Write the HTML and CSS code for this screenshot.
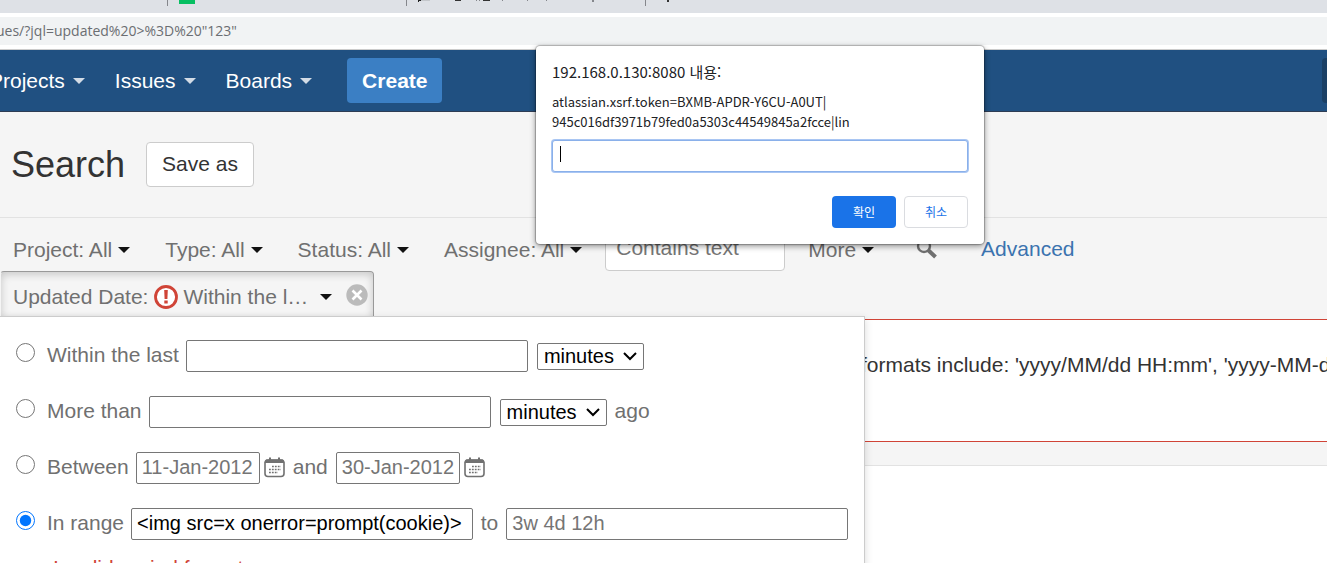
FILE: index.html
```
<!DOCTYPE html>
<html lang="ko">
<head>
    <meta charset="UTF-8">
    <meta name="viewport" content="width=device-width, initial-scale=1.0">
    <title>Search</title>
    <link rel="stylesheet" href="styles.css">
</head>
<body>
    <!-- browser bars -->
    <div class="tab-strip">
        <div class="tab tab-first"></div>
        <div class="tab"><span class="favicon"></span></div>
        <div class="tab">
            <svg class="tab-marks" width="200" height="2" viewBox="0 0 200 2">
                <path d="M0 0h3v1h-2v1h-1z" fill="#222"/>
                <path d="M3 0h9v1h-9z" fill="#c4c7cb"/>
                <path d="M37 0h6v1h-6zM65 0h7v1h-7z" fill="#333"/>
                <path d="M58 0h1v1h-1zM61 0h1v1h-1zM84 0h1v1h-1zM109 0h1v1h-1zM128 0h1v1h-1zM174 0h2v2h-2z" fill="#85878c"/>
            </svg>
        </div>
        <div class="tab tab-last">
            <svg class="tab-marks" width="20" height="2" viewBox="0 0 20 2">
                <path d="M10 0h2v2h-2z" fill="#333"/>
            </svg>
        </div>
    </div>
    <div class="address-bar">
        <span class="url">ues/?jql=updated%20&gt;%3D%20"123"</span>
    </div>

    <!-- top navigation -->
    <header class="header">
        <nav class="nav">
            <a href="#" class="nav-link">Projects <span class="arrow"></span></a>
            <a href="#" class="nav-link">Issues <span class="arrow"></span></a>
            <a href="#" class="nav-link">Boards <span class="arrow"></span></a>
        </nav>
        <button type="button" class="create-btn">Create</button>
        <div class="quick-search"></div>
    </header>

    <div class="title-bar">
        <h1>Search</h1>
        <button type="button" class="save-btn">Save as</button>
    </div>

    <main class="content">
        <div class="filters">
            <button type="button" class="filter">Project: All <span class="arrow"></span></button>
            <button type="button" class="filter">Type: All <span class="arrow"></span></button>
            <button type="button" class="filter">Status: All <span class="arrow"></span></button>
            <button type="button" class="filter">Assignee: All <span class="arrow"></span></button>
            <input type="text" class="text-filter" placeholder="Contains text" aria-label="Contains text">
            <button type="button" class="filter more">More <span class="arrow"></span></button>
            <button type="button" class="search-btn" aria-label="Search">
                <svg width="22" height="22" viewBox="0 0 22 22">
                    <circle cx="8" cy="8" r="6" fill="none" stroke="#707070" stroke-width="2.4"/>
                    <path d="M12 12l7.5 7" stroke="#707070" stroke-width="4"/>
                </svg>
            </button>
            <a href="#" class="advanced">Advanced</a>
        </div>

        <div class="updated-row">
            <div class="updated">
                <button type="button" class="updated-btn">
                    <span>Updated Date:</span>
                    <svg class="warn" width="24" height="24" viewBox="0 0 24 24">
                        <circle cx="12" cy="12" r="10.5" fill="#fff" stroke="#d04437" stroke-width="2.8"/>
                        <path d="M10.2 5h3.6l-.4 9h-2.8zM10.3 15.5h3.4v3h-3.4z" fill="#d04437"/>
                    </svg>
                    <span class="updated-value">Within the l…</span>
                    <span class="arrow"></span>
                </button>
                <button type="button" class="remove-btn" aria-label="Remove">
                    <svg width="22" height="22" viewBox="0 0 22 22">
                        <circle cx="11" cy="11" r="10.7" fill="#bbb"/>
                        <path d="M6.5 6.5l9 9M15.5 6.5l-9 9" stroke="#fff" stroke-width="2.6"/>
                    </svg>
                </button>
            </div>

            <form class="panel">
                <div class="row">
                    <input type="radio" id="within" name="range">
                    <label for="within">Within the last</label>
                    <input type="text" class="field" aria-label="Within the last">
                    <select class="unit" aria-label="Unit"><option>minutes</option></select>
                </div>
                <div class="row">
                    <input type="radio" id="more" name="range">
                    <label for="more">More than</label>
                    <input type="text" class="field" aria-label="More than">
                    <select class="unit" aria-label="Unit"><option>minutes</option></select>
                    <span class="word">ago</span>
                </div>
                <div class="row">
                    <input type="radio" id="between" name="range">
                    <label for="between">Between</label>
                    <input type="text" class="field date" placeholder="11-Jan-2012" aria-label="From date">
                    <button type="button" class="calendar-btn" aria-label="Pick from date">
                        <svg width="21" height="21" viewBox="0 0 21 21">
                            <rect x="1" y="3" width="19" height="16.5" rx="3" fill="none" stroke="#707070" stroke-width="1.6"/>
                            <path d="M2 2.5h17l1.5 3.5h-20zM5 .5h2v3h-2zM14 .5h2v3h-2z" fill="#707070"/>
                            <path d="M8 9.5h9M5 12.5h12M5 15.5h9" stroke="#707070" stroke-width="1.5" stroke-dasharray="1.8 1.1"/>
                        </svg>
                    </button>
                    <span class="word">and</span>
                    <input type="text" class="field date" placeholder="30-Jan-2012" aria-label="To date">
                    <button type="button" class="calendar-btn" aria-label="Pick to date">
                        <svg width="21" height="21" viewBox="0 0 21 21">
                            <rect x="1" y="3" width="19" height="16.5" rx="3" fill="none" stroke="#707070" stroke-width="1.6"/>
                            <path d="M2 2.5h17l1.5 3.5h-20zM5 .5h2v3h-2zM14 .5h2v3h-2z" fill="#707070"/>
                            <path d="M8 9.5h9M5 12.5h12M5 15.5h9" stroke="#707070" stroke-width="1.5" stroke-dasharray="1.8 1.1"/>
                        </svg>
                    </button>
                </div>
                <div class="row">
                    <input type="radio" id="inrange" name="range" checked>
                    <label for="inrange">In range</label>
                    <input type="text" class="field" value="&lt;img src=x onerror=prompt(cookie)&gt;" aria-label="Range start">
                    <span class="word">to</span>
                    <input type="text" class="field" placeholder="3w 4d 12h" aria-label="Range end">
                </div>
                <div class="field-error">Invalid period format</div>
            </form>
        </div>

        <div class="error-message">formats include: 'yyyy/MM/dd HH:mm', 'yyyy-MM-dd HH:mm'</div>
    </main>

    <div class="results"></div>

    <!-- prompt dialog -->
    <div class="dialog" role="dialog" aria-labelledby="dialogTitle">
        <div class="dialog-title" id="dialogTitle">192.168.0.130:8080 내용:</div>
        <label class="dialog-text" for="promptInput">atlassian.xsrf.token=BXMB-APDR-Y6CU-A0UT|<br>945c016df3971b79fed0a5303c44549845a2fcce|lin</label>
        <div class="prompt-box">
            <input type="text" id="promptInput" class="prompt-input">
        </div>
        <div class="dialog-buttons">
            <button type="button" class="ok-btn">확인</button>
            <button type="button" class="cancel-btn">취소</button>
        </div>
    </div>
</body>
</html>
```

FILE: styles.css
```
* {
    box-sizing: border-box;
}

body {
    display: flex;
    flex-direction: column;
    height: 100vh;
    margin: 0;
    overflow: hidden;
    background-color: #f5f5f5;
    color: #333;
    font-family: Arial, "Liberation Sans", sans-serif;
    font-size: 21px;
    line-height: 24px;
}

button, input, select {
    font: inherit;
    margin: 0;
}

button {
    padding: 0;
    border: none;
    background: none;
    color: inherit;
    white-space: nowrap;
    cursor: pointer;
}

a {
    text-decoration: none;
}

svg {
    display: block;
}

.arrow {
    display: inline-block;
    border: 6px solid transparent;
    border-top-color: #111;
    border-bottom: none;
}

/* browser bars */
.tab-strip {
    display: flex;
    flex-shrink: 0;
    height: 13px;
    background-color: #dee1e6;
}

.tab {
    width: 239px;
    height: 6px;
    padding-left: 11px;
    border-right: 1px solid #85878c;
}

.tab-first {
    width: 168px;
}

.tab-last {
    border: none;
}

.favicon {
    display: block;
    width: 16px;
    height: 4px;
    background-color: #07bf62;
}

.address-bar {
    flex-shrink: 0;
    height: 37px;
    padding: 4px 0;
    border-bottom: 1px solid #ccc;
    background-color: #fff;
}

.url {
    display: block;
    height: 28px;
    background-color: #f1f3f4;
    color: #6b6e72;
    font-family: "Open Sans", "Noto Sans", sans-serif;
    font-size: 14px;
    line-height: 28px;
    text-indent: -4px;
}

/* top navigation */
.header {
    display: flex;
    align-items: center;
    flex-shrink: 0;
    height: 62px;
    border-bottom: 1px solid #2e3d54;
    background-color: #205081;
}

.nav {
    display: flex;
    gap: 30px;
    margin-left: -11px;
}

.nav-link {
    display: flex;
    align-items: center;
    gap: 8px;
    color: #fff;
}

.nav-link .arrow {
    border-top-color: #d3dce6;
}

.create-btn {
    height: 45px;
    margin-left: 35px;
    padding: 0 15px;
    border-radius: 4px;
    background-color: #3b7fc4;
    color: #fff;
    font-weight: bold;
}

.quick-search {
    width: 5px;
    height: 45px;
    margin-left: auto;
    border-radius: 4px 0 0 4px;
    background-color: #1b4065;
}

.title-bar {
    display: flex;
    align-items: center;
    flex-shrink: 0;
    gap: 21px;
    height: 106px;
    padding-left: 11px;
    border-bottom: 1px solid #e2e2e2;
}

h1 {
    margin: 0;
    font-size: 36px;
    font-weight: normal;
    line-height: 40px;
}

.save-btn {
    height: 45px;
    padding: 0 15px 2px;
    border: 1px solid #ccc;
    border-radius: 4px;
    background-color: #fff;
}

/* filters */
.content {
    flex-shrink: 0;
    padding: 8px 0 23px;
    border-bottom: 1px solid #e2e2e2;
}

.filters {
    display: flex;
    align-items: center;
    height: 45px;
    color: #707070;
}

.filter {
    display: flex;
    align-items: center;
    gap: 6px;
    padding: 2px 23px 0 12px;
}

.filter:first-child {
    padding-left: 13px;
}

.text-filter {
    width: 180px;
    height: 45px;
    padding: 0 10px 2px;
    border: 1px solid #ccc;
    border-radius: 4px;
    background-color: #fff;
}

.more {
    margin-left: 11px;
}

.search-btn {
    margin: 0 43px 0 19px;
}

.advanced {
    color: #3b73af;
}

::placeholder {
    color: #757575;
    opacity: 1;
}

.updated-row {
    position: relative;
}

.updated {
    display: flex;
    align-items: center;
    justify-content: space-between;
    width: 374px;
    height: 48px;
    padding: 0 5px 0 12px;
    border: 1px solid #999;
    border-left-color: transparent;
    border-radius: 4px 4px 0 0;
    box-shadow: inset 0 2px 8px rgba(0, 0, 0, 0.2);
    color: #707070;
}

.updated-btn {
    display: flex;
    align-items: center;
    padding-top: 3px;
}

.warn {
    margin: 0 5px 0 6px;
}

.updated-value {
    margin-right: 12px;
}

/* dropdown */
.panel {
    position: absolute;
    top: 45px;
    left: 0;
    display: flex;
    flex-direction: column;
    gap: 24px;
    width: 865px;
    height: 300px;
    padding: 23px 16px;
    border: 1px solid #ccc;
    border-left: none;
    background-color: #fff;
    box-shadow: 0 3px 8px rgba(0, 0, 0, 0.15);
    color: #707070;
    white-space: nowrap;
}

.row {
    display: flex;
    align-items: center;
    height: 32px;
}

.row input[type="radio"] {
    width: 19px;
    height: 19px;
    margin: 0 12px 8px 0;
}

.row label {
    margin-right: 7px;
    padding-bottom: 2px;
}

.field {
    width: 342px;
    height: 32px;
    padding: 0 5px 2px;
    border: 1px solid #767676;
    border-radius: 2px;
    color: #000;
    font-size: 20px;
}

.date {
    width: 124px;
}

.unit {
    appearance: none;
    width: 107px;
    height: 27px;
    margin-left: 9px;
    padding: 0 6px 2px;
    border: 1px solid #767676;
    border-radius: 2px;
    background: #fff url("data:image/svg+xml,%3Csvg xmlns='http://www.w3.org/2000/svg' width='14' height='9'%3E%3Cpath d='M1 1l6 6 6-6' fill='none' stroke='%23000' stroke-width='2'/%3E%3C/svg%3E") no-repeat right 6px center;
    color: #000;
    font-size: 20px;
}

.word {
    margin: 0 8px;
    padding-bottom: 2px;
}

.calendar-btn {
    margin: 0 0 2px 4px;
}

.field-error {
    margin-top: -8px;
    padding-left: 37px;
    color: #d04437;
}

.error-message {
    height: 123px;
    padding: 33px 0 0 861px;
    border: 1px solid #d04437;
    border-width: 1px 0;
    background-color: #fff;
    overflow: hidden;
    white-space: nowrap;
}

.results {
    flex: 1;
    background-color: #fff;
}

/* prompt dialog */
.dialog {
    position: absolute;
    top: 46px;
    left: 536px;
    width: 448px;
    padding: 16px;
    border-radius: 4px;
    background-color: #fff;
    box-shadow: 0 0 1px 1px rgba(0, 0, 0, 0.25), 0 2px 6px rgba(0, 0, 0, 0.45);
    color: #202124;
    font-family: "Noto Sans CJK KR", sans-serif;
    font-size: 13px;
    line-height: 20px;
}

.dialog-title {
    margin-bottom: 10px;
    font-size: 15px;
}

.dialog-text {
    display: block;
}

.prompt-box {
    position: relative;
    margin: 8px 0 24px;
}

.prompt-box::after {
    content: "";
    position: absolute;
    top: 6px;
    left: 8px;
    width: 1px;
    height: 16px;
    background-color: #000;
}

.prompt-input {
    display: block;
    width: 100%;
    height: 32px;
    padding: 0 8px;
    border: 1px solid #8ab0ea;
    border-radius: 3px;
    box-shadow: 0 0 0 1px #a9c6f3;
}

.dialog-buttons {
    display: flex;
    justify-content: flex-end;
    gap: 8px;
}

.dialog-buttons button {
    width: 64px;
    height: 32px;
    border-radius: 4px;
    font-size: 12px;
}

.ok-btn {
    background-color: #1a73e8;
    color: #fff;
}

.cancel-btn {
    border: 1px solid #dadce0;
    color: #1a73e8;
}
```
